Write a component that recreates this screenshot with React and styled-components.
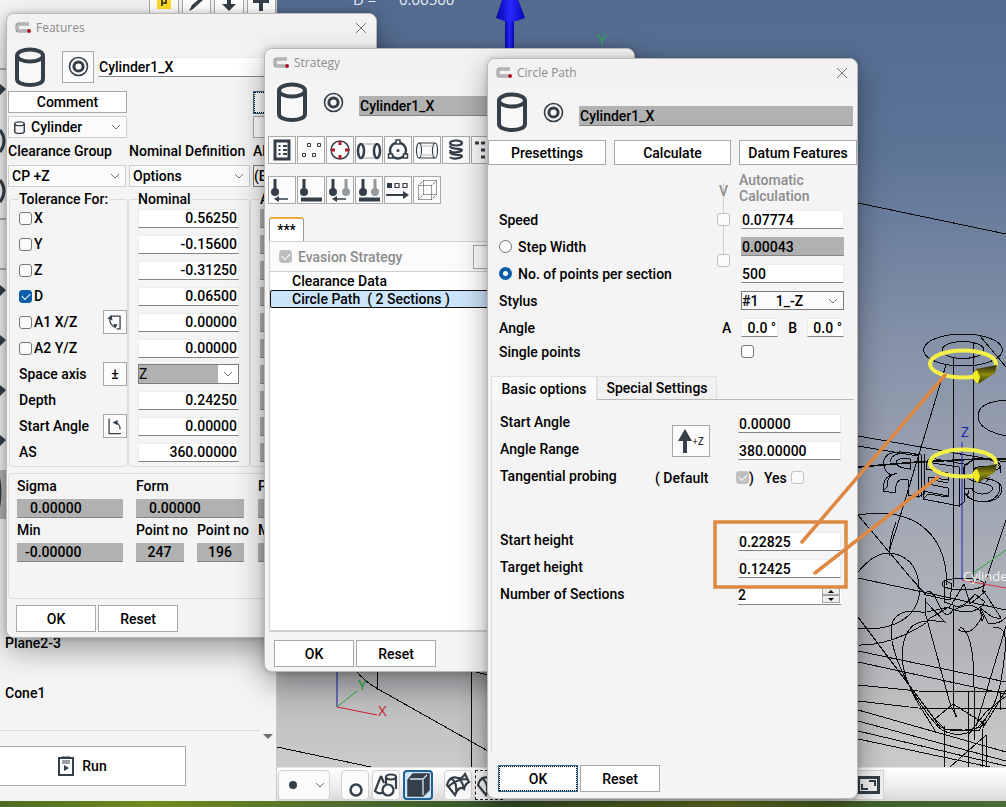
import React, { useState } from 'react'
import styled, { createGlobalStyle, ThemeProvider, css } from 'styled-components'

const theme = {
  ink: '#343f49',
  text: '#000',
  muted: '#8c8c8c',
  panel: '#f4f4f4',
  line: '#a8a8a8',
  soft: '#dcdcdc',
  readOnly: '#b1b1b1',
  blue: '#0c5ea8',
  mark: '#dd8843',
}

const GlobalStyle = createGlobalStyle`
  * { box-sizing: border-box; }
  body {
    margin: 0;
    overflow: hidden;
    font: 500 14px/16px Roboto, "Liberation Sans", sans-serif;
    color: #000;
  }
  button, input, select { font: inherit; color: inherit; margin: 0; border-radius: 0; }
`

/* ---------- desktop ---------- */

const Desktop = styled.div`
  position: relative;
  display: flex;
  flex-direction: column;
  height: 100vh;
  overflow: hidden;
`

const Workspace = styled.div`
  flex: 1;
  display: grid;
  grid-template-columns: 277px 1fr;
  min-height: 0;
`

const Grass = styled.div`
  height: 6px;
  background: linear-gradient(90deg, #4c6b22, #6f8c1d 15%, #4d6b2c 35%, #35522b 50%, #66751d 72%, #3f5f2c 88%, #4c6a3a);
`

const Sidebar = styled.aside`
  display: flex;
  flex-direction: column;
  background: ${(p) => p.theme.panel};
  border-right: 1px solid #c9c9c9;
  overflow: hidden;
`

const TopTools = styled.div`
  display: flex;
  align-items: flex-end;
  gap: 3px;
  height: 18px;
  padding-left: 149px;
`

const TopTool = styled.button`
  display: flex;
  align-items: flex-start;
  justify-content: center;
  width: 30px;
  height: 18px;
  padding: 0;
  background: #fff;
  border: solid ${(p) => p.theme.line};
  border-width: 0 1px;
`

const EdgeIcons = styled.div`
  flex: 1;
  min-height: 0;
`

const FeatureList = styled.ul`
  height: 96px;
  margin: 0 16px 0 0;
  padding: 0 5px;
  list-style: none;
  border-bottom: 1px solid ${(p) => p.theme.soft};
`

const FeatureItem = styled.li`
  height: 50px;
`

const RunArea = styled.div`
  display: flex;
  justify-content: space-between;
  align-items: flex-start;
  height: 70px;
  padding-right: 3px;
`

const RunButton = styled.button`
  display: flex;
  align-items: center;
  justify-content: center;
  gap: 8px;
  width: 186px;
  height: 40px;
  margin-top: 15px;
  padding: 0 20px 0 0;
  background: #fff;
  border: 1px solid ${(p) => p.theme.line};
  border-left: 0;
`

const Viewport = styled.main`
  display: flex;
  flex-direction: column;
  min-width: 0;
  min-height: 0;
`

const Scene = styled.svg`
  flex: 1;
  display: block;
  width: 100%;
  min-height: 0;
  background: linear-gradient(#536b8f, #5d7497 20%, #8592a8 45%, #a3a9b5 68%, #b4b5b9 85%, #cbcbcb);
`

const ViewTools = styled.div`
  display: flex;
  align-items: center;
  gap: 3px;
  height: 34px;
  padding: 0 122px 0 1px;
  background: linear-gradient(#fff, #ececec 60%, #d9d9d9);
  border-top: 1px solid #e3e3e3;
`

const ViewButton = styled.button`
  display: flex;
  align-items: center;
  justify-content: center;
  flex: none;
  width: ${(p) => p.$width || 28}px;
  height: 30px;
  margin-left: ${(p) => (p.$group ? 8 : 0)}px;
  padding: 0;
  background: ${(p) => (p.$active ? '#cfe5fa' : '#fbfbfb')};
  border: ${(p) => (p.$active ? '2px solid #215f97' : '1px solid #d2d2d2')};
  border-radius: 4px;
  ${(p) => p.$last && css`margin-left: auto; border-radius: 0; background: #f2f2f2; justify-content: flex-end; padding-right: 3px;`}
  ${(p) => p.$dotted && css`border: 1px dashed #222; border-radius: 0;`}
`

/* ---------- window parts ---------- */

const Frame = styled.section`
  position: absolute;
  left: ${(p) => p.$x}px;
  top: ${(p) => p.$y}px;
  width: 371px;
  background: ${(p) => p.theme.panel};
  border: 1px solid #b9b9b9;
  border-radius: 8px;
  box-shadow: 0 12px 30px rgba(0, 0, 0, 0.36), 0 0 6px rgba(0, 0, 0, 0.18);
  overflow: hidden;
`

const TitleBar = styled.header`
  display: flex;
  align-items: center;
  gap: 4px;
  height: 28px;
  padding: 0 8px;
  background: #f2f2f2;
`

const Title = styled.h1`
  flex: 1;
  margin: 0;
  font: 400 12px/16px "Open Sans", "Noto Sans", sans-serif;
  color: ${(p) => p.theme.muted};
`

const Close = styled.button`
  display: flex;
  width: 14px;
  height: 14px;
  padding: 1px;
  background: none;
  border: 0;
`

const Heading = styled.div`
  display: flex;
  align-items: center;
  height: ${(p) => p.$height || 50}px;
  padding-left: ${(p) => p.$indent || 8}px;
`

const IconSlot = styled.span`
  display: flex;
  align-items: center;
  justify-content: center;
  flex: none;
  width: 32px;
  height: 32px;
  margin: 0 ${(p) => p.$after || 0}px 0 ${(p) => p.$before || 10}px;
`

const Square = styled.button`
  display: flex;
  align-items: center;
  justify-content: center;
  flex: none;
  width: ${(p) => p.$w || 28}px;
  height: ${(p) => p.$h || p.$w || 28}px;
  padding: 0;
  background: #fbfbfb;
  border: 1px solid ${(p) => p.theme.line};
`

const Field = styled.input`
  display: block;
  flex: ${(p) => (p.$grow ? 1 : 'none')};
  width: ${(p) => p.$w || 103}px;
  min-width: 0;
  height: ${(p) => p.$h || 19}px;
  padding: 0 1px 0 ${(p) => p.$indent || 0}px;
  text-align: ${(p) => p.$align || 'left'};
  background: ${(p) => (p.readOnly ? p.theme.readOnly : '#fff')};
  border: 1px solid ${(p) => (p.readOnly ? p.theme.readOnly : '#ececec')};
  border-bottom-color: #858585;
  outline: 0;
`

const Button = styled.button`
  flex: none;
  width: ${(p) => p.$w || 80}px;
  height: ${(p) => p.$h || 27}px;
  padding: 0;
  background: #fff;
  border: 1px solid ${(p) => p.theme.line};
  ${(p) => p.$focused && css`
    border-color: #2c6c96;
    outline: 1px dotted #000;
    outline-offset: -2px;
  `}
`

const Check = styled.input.attrs({ type: 'checkbox' })`
  appearance: none;
  flex: none;
  display: grid;
  place-items: center;
  width: 13px;
  height: 13px;
  background: #fbfbfb;
  border: 1px solid #777;
  border-radius: 3px;
  &:checked { background: ${(p) => p.theme.blue}; border-color: ${(p) => p.theme.blue}; }
  &:checked::before {
    content: '';
    width: 7px;
    height: 4px;
    margin-bottom: 2px;
    border: solid #fff;
    border-width: 0 0 1px 1px;
    transform: rotate(-45deg);
  }
  &:disabled { border-color: #c2c2c2; }
  &:disabled:checked { background: #bebebe; }
`

const Radio = styled.input.attrs({ type: 'radio' })`
  appearance: none;
  width: 13px;
  height: 13px;
  background: #fbfbfb;
  border: 1px solid #6f6f6f;
  border-radius: 50%;
  &:checked { background: #fff; border: 4px solid ${(p) => p.theme.blue}; }
`

const ComboBox = styled.div`
  display: grid;
  grid-template-columns: 1fr 15px;
  align-items: center;
  width: ${(p) => p.$w}px;
  height: ${(p) => p.$h || 22}px;
  background: ${(p) => (p.$shaded ? `linear-gradient(90deg, #b1b1b1 calc(100% - 20px), #fff calc(100% - 20px))` : '#fbfbfb')};
  border: 1px solid ${(p) => (p.$strong ? '#7b7b7b' : '#cfcfcf')};
  select {
    grid-area: 1 / 1 / 2 / 3;
    appearance: none;
    width: 100%;
    height: 100%;
    padding: 0 0 0 ${(p) => p.$indent || 0}px;
    background: none;
    border: 0;
    outline: 0;
    font-weight: ${(p) => (p.$light ? 400 : 500)};
  }
  svg { pointer-events: none; }
  svg.lead { grid-area: 1 / 1; margin-left: 5px; }
  svg.arrow { grid-area: 1 / 2; }
`

const Combo = ({ label, value, lead, ...rest }) => (
  <ComboBox {...rest}>
    <select aria-label={label} defaultValue={value}>
      <option>{value}</option>
    </select>
    {lead}
    <Chevron className="arrow" />
  </ComboBox>
)

/* ---------- icons ---------- */

const Chevron = (props) => (
  <svg width="10" height="6" viewBox="0 0 10 6" fill="none" stroke="#777" {...props}>
    <path d="M1 1l4 4 4-4" />
  </svg>
)

const AppIcon = () => (
  <svg width="17" height="12" viewBox="0 0 17 12" fill="none">
    <path d="M14 2H4Q2 2 2 4v3q0 2 2 2h8" stroke="#8c8f8f" strokeWidth="3" />
    <path d="M14 2H4Q2 2 2 4v3q0 2 2 2h8" stroke="#d7dad9" />
    <circle cx="14" cy="9" r="2" fill="#a90f20" />
  </svg>
)

const CloseIcon = () => (
  <svg width="12" height="12" viewBox="0 0 12 12" stroke="#777">
    <path d="M1 1l10 10M11 1L1 11" />
  </svg>
)

const Cylinder = ({ small, ...rest }) => (
  <svg
    width={small ? 11 : 30}
    height={small ? 13 : 40}
    viewBox="0 0 30 40"
    preserveAspectRatio="none"
    fill="none"
    stroke="#343f49"
    strokeWidth="4"
    {...rest}
  >
    <path d="M2 9v23c0 8 26 8 26 0V9" fill="#f8f8f8" />
    <ellipse cx="15" cy="8.500" rx="13" ry="6" />
  </svg>
)

const Rings = () => (
  <svg width="21" height="21" viewBox="0 0 21 21" fill="none" stroke="#343f49">
    <circle cx="10.500" cy="10.500" r="9" strokeWidth="1.600" />
    <circle cx="10.500" cy="10.500" r="4.600" strokeWidth="3" />
  </svg>
)

const Icon = ({ children, size = 26, ...rest }) => (
  <svg width={size} height={size} viewBox="0 0 26 26" fill="none" stroke="#343f49" strokeWidth="1.500" {...rest}>
    {children}
  </svg>
)

const Probe = ({ x, color = '#343f49' }) => (
  <g fill={color} stroke="none">
    <path d={`M${x - 1.5} 2h3v11h-3z`} />
    <circle cx={x} cy="15" r="4" />
  </g>
)

const pathIcons = [
  ['List', (
    <Icon key="i">
      <path d="M6 4h14v18H6z" strokeWidth="3" />
      <path d="M9.500 9h2M14 9h4M9.500 13h2M14 13h4M9.500 17h2M14 17h4" strokeWidth="2" />
    </Icon>
  )],
  ['Points', (
    <Icon key="i" strokeWidth="1">
      <path d="M9.500 6.500h3v3h-3zM19.500 6.500h3v3h-3zM4.500 16.500h3v3h-3zM14.500 16.500h3v3h-3z" />
    </Icon>
  )],
  ['Circle', (
    <Icon key="i">
      <circle cx="13" cy="13" r="9" />
      <path d="M13 4v4M13 18v4M4 13h4M18 13h4" stroke="#b01f30" strokeWidth="3" />
    </Icon>
  )],
  ['Circle path', (
    <Icon key="i">
      <ellipse cx="5" cy="14" rx="3" ry="7" strokeWidth="2.500" />
      <ellipse cx="21" cy="14" rx="3" ry="7" strokeWidth="2.500" />
      <path d="M7 7h12M7 21h12" strokeWidth="1" stroke="#999" />
    </Icon>
  )],
  ['Three points', (
    <Icon key="i">
      <circle cx="13" cy="13.500" r="8" strokeWidth="2.500" />
      <circle cx="13" cy="13.500" r="1.500" fill="#343f49" stroke="none" />
      <path d="M11 3h4v4h-4zM3.500 17h4v4h-4zM18.500 17h4v4h-4z" fill="#fff" />
    </Icon>
  )],
  ['Line path', (
    <Icon key="i" strokeWidth="1.200">
      <path d="M5 6h16M5 21h16" />
      <ellipse cx="5" cy="13.500" rx="2.500" ry="7.500" />
      <ellipse cx="21" cy="13.500" rx="2.500" ry="7.500" />
      <path d="M5 9h16M5 18h16" stroke="#bbb" />
    </Icon>
  )],
  ['Helix', (
    <Icon key="i" strokeWidth="2.200">
      <ellipse cx="13" cy="6" rx="6" ry="2.500" />
      <path d="M7 9c0 4 12 2 12 4s-12 4-12 0M7 15c0 4 12 2 12 4s-10 4-12 1" />
    </Icon>
  )],
  ['Grid', (
    <Icon key="i">
      <path d="M3 6h4M9 6h4M15 6h4M9 13h4M15 13h4M9 20h4M15 20h4" strokeWidth="3" />
    </Icon>
  )],
]

const probeIcons = [
  ['Probe back', (
    <Icon key="i">
      <Probe x={6} />
      <path d="M7 22h12" />
      <path d="M5 22l5-3v6z" fill="#343f49" stroke="none" />
    </Icon>
  )],
  ['Probe surface', (
    <Icon key="i">
      <Probe x={6} />
      <path d="M3 22.500h21" strokeWidth="4" />
    </Icon>
  )],
  ['Probe move', (
    <Icon key="i">
      <Probe x={6} />
      <Probe x={19} color="#959a9e" />
      <path d="M7 22h12" />
      <path d="M5 22l5-3v6z" fill="#343f49" stroke="none" />
    </Icon>
  )],
  ['Probe scan', (
    <Icon key="i">
      <Probe x={7} />
      <Probe x={19} color="#959a9e" />
      <path d="M3 22.500h21" strokeWidth="4" />
    </Icon>
  )],
  ['Sequence', (
    <Icon key="i">
      <path d="M2 6h5v5H2z" fill="#343f49" stroke="none" />
      <path d="M10 6.500h4v4h-4zM18 6.500h4v4h-4z" strokeWidth="1.200" />
      <path d="M1 18h20" strokeWidth="2" />
      <path d="M24 18l-6-4v8z" fill="#343f49" stroke="none" />
    </Icon>
  )],
  ['Clearance cube', (
    <Icon key="i" strokeWidth="1" strokeDasharray="1 1">
      <path d="M4.500 8.500h13v14h-13zM9.500 3.500h13v14h-13zM4.500 8.500l5-5M17.500 8.500l5-5M4.500 22.500l5-5M17.500 22.500l5-5" />
    </Icon>
  )],
]

const CornerArrow = () => (
  <Icon size="22">
    <path d="M7 6h12v15h-4M7 9v3c1 4 3 6 6 7" />
    <path d="M4 9l5-4 1 6zM11 15l5 1-3 5z" fill="#343f49" stroke="none" />
  </Icon>
)

const AngleArrow = () => (
  <Icon size="22">
    <path d="M6 4v18h14" />
    <path d="M13 9c4 0 6 4 6 8" />
    <path d="M10 9l6-3v6z" fill="#343f49" stroke="none" />
  </Icon>
)

/* ---------- features window ---------- */

const FeatureGrid = styled.div`
  display: grid;
  grid-template-columns: 118px 121px 1fr;
  grid-template-rows: 25px 21px 28px 22px;
  column-gap: 3px;
  align-items: start;
  padding: 0 0 0 1px;
  white-space: nowrap;
`

const SideControl = styled.span`
  grid-column: 3;
  display: block;
`

const ColumnLabel = styled.span`
  align-self: center;
`

const Groups = styled.div`
  display: grid;
  grid-template-columns: 119px 122px 1fr;
  padding: 4px 0 0 2px;
`

const Group = styled.fieldset`
  min-width: 0;
  height: 276px;
  margin: 0;
  padding: 0 9px 0 9px;
  border: 1px solid ${(p) => p.theme.soft};
  border-radius: 3px;
  legend { height: 16px; margin-bottom: -2px; padding: 0 2px 0 0; white-space: nowrap; }
`

const GroupRow = styled.div`
  display: flex;
  align-items: center;
  gap: 2px;
  height: 26px;
  label { flex: 1; }
  & > button { margin-right: -9px; }
`

const Results = styled.div`
  display: grid;
  grid-template-columns: 108px 50px 50px 1fr;
  grid-template-rows: 24px 20px 24px 20px;
  column-gap: 11px;
  align-items: center;
  height: 126px;
  margin: 6px 0 0 1px;
  padding-left: 8px;
  border: 1px solid ${(p) => p.theme.soft};
  border-radius: 3px;
  white-space: nowrap;
`

const Wide = styled.label`
  grid-column: span 2;
`

const WideField = styled(Field)`
  grid-column: span 2;
`

const Footer = styled.footer`
  display: flex;
  gap: 2px;
  padding: ${(p) => p.$pad || '6px 9px 5px'};
`

const tolerances = [
  ['X', '0.56250'],
  ['Y', '-0.15600'],
  ['Z', '-0.31250'],
  ['D', '0.06500'],
  ['A1 X/Z', '0.00000'],
  ['A2 Y/Z', '0.00000'],
  ['Space axis', 'Z'],
  ['Depth', '0.24250'],
  ['Start Angle', '0.00000'],
  ['AS', '360.00000'],
]

const rowButtons = {
  'A1 X/Z': <CornerArrow />,
  'Space axis': '±',
  'Start Angle': <AngleArrow />,
}

function WindowBar({ title }) {
  return (
    <TitleBar>
      <AppIcon />
      <Title>{title}</Title>
      <Close aria-label="Close">
        <CloseIcon />
      </Close>
    </TitleBar>
  )
}

function FeaturesWindow() {
  return (
    <Frame $x={6} $y={13}>
      <WindowBar title="Features" />
      <Heading $height={49}>
        <Cylinder />
        <IconSlot $before={17} $after={4}>
          <Square $w={32} aria-label="Rings">
            <Rings />
          </Square>
        </IconSlot>
        <Field $grow $h={20} aria-label="Name" defaultValue="Cylinder1_X" />
      </Heading>
      <FeatureGrid>
        <Button $w={119} $h={22}>Comment</Button>
        <SideControl>
          <Button $w={100} $h={23} $focused aria-label="More" />
        </SideControl>
        <Combo $w={119} label="Feature type" value="Cylinder" $indent={22} lead={<Cylinder small className="lead" />} />
        <SideControl>
          <Button $w={100} $h={22} aria-label="Options" />
        </SideControl>
        <ColumnLabel>Clearance Group</ColumnLabel>
        <ColumnLabel>Nominal Definition</ColumnLabel>
        <ColumnLabel>Al</ColumnLabel>
        <Combo $w={118} label="Clearance Group" value="CP +Z" $indent={3} />
        <Combo $w={121} label="Nominal Definition" value="Options" $indent={3} />
        <Combo $w={100} $strong label="Alignment" value="(E" />
      </FeatureGrid>
      <Groups>
        <Group>
          <legend>Tolerance For:</legend>
          {tolerances.map(([name], i) => (
            <GroupRow key={name}>
              {i < 6 && <Check id={`tol-${i}`} defaultChecked={name === 'D'} />}
              <label htmlFor={i < 6 ? `tol-${i}` : `nom-${i}`}>{name}</label>
              {rowButtons[name] && (
                <Square $w={24} aria-label={`${name} setting`}>
                  {rowButtons[name]}
                </Square>
              )}
            </GroupRow>
          ))}
        </Group>
        <Group>
          <legend>Nominal</legend>
          {tolerances.map(([name, value], i) => (
            <GroupRow key={name}>
              {name === 'Space axis' ? (
                <Combo $w={101} $h={20} $shaded $strong $light label={name} value={value} />
              ) : (
                <Field id={`nom-${i}`} $w={101} $align="right" aria-label={`Nominal ${name}`} defaultValue={value} />
              )}
            </GroupRow>
          ))}
        </Group>
        <Group>
          <legend>A</legend>
          {tolerances.map(([name]) => (
            <GroupRow key={name}>
              <Field readOnly $w={90} aria-label={`Actual ${name}`} />
            </GroupRow>
          ))}
        </Group>
      </Groups>
      <Results>
        <label htmlFor="sigma">Sigma</label>
        <Wide htmlFor="form">Form</Wide>
        <span>P</span>
        <Field id="sigma" readOnly $w={106} $indent={12} defaultValue="0.00000" />
        <WideField id="form" readOnly $w={108} $indent={12} defaultValue="0.00000" />
        <Field readOnly $w={90} aria-label="P" />
        <label htmlFor="min">Min</label>
        <label htmlFor="no1">Point no</label>
        <label htmlFor="no2">Point no</label>
        <span>M</span>
        <Field id="min" readOnly $w={106} $indent={7} defaultValue="-0.00000" />
        <Field id="no1" readOnly $w={48} $align="center" defaultValue="247" />
        <Field id="no2" readOnly $w={47} $align="center" defaultValue="196" />
        <Field readOnly $w={90} aria-label="M" />
      </Results>
      <Footer>
        <Button>OK</Button>
        <Button>Reset</Button>
      </Footer>
    </Frame>
  )
}

/* ---------- strategy window ---------- */

const IconBar = styled.div`
  display: flex;
  gap: 1px;
  padding: ${(p) => p.$top}px 0 0 3px;
`

const StrategyTab = styled.button`
  display: block;
  width: 35px;
  height: 24px;
  margin: 13px 0 0 4px;
  padding: 0;
  background: #fff;
  border: 1px solid #999;
  border-top: 2px solid #e6ab39;
  border-bottom: 0;
  border-radius: 3px 3px 0 0;
`

const StrategyPanel = styled.div`
  margin-left: 4px;
  border: 1px solid #cfcfcf;
  border-width: 1px 0 2px 1px;
`

const Evasion = styled.div`
  display: flex;
  align-items: center;
  gap: 6px;
  height: 30px;
  padding-left: 9px;
  background: #fbfbfb;
  border-bottom: 1px solid #cfcfcf;
  color: ${(p) => p.theme.muted};
  label { width: 169px; }
`

const StepList = styled.ul`
  height: 358px;
  margin: 0;
  padding: 0;
  list-style: none;
  background: #fff;
`

const Step = styled.li`
  height: 18px;
  padding: 0 21px;
  line-height: 16px;
  border: 1px solid ${(p) => (p.$selected ? '#111' : 'transparent')};
  border-radius: 2px;
  background: ${(p) => (p.$selected ? '#cce4f9' : 'none')};
  white-space: pre;
`

function StrategyWindow() {
  return (
    <Frame $x={264} $y={48}>
      <WindowBar title="Strategy" />
      <Heading $indent={12}>
        <Cylinder />
        <IconSlot $after={10}>
          <Rings />
        </IconSlot>
        <NameField $grow readOnly $h={20} aria-label="Name" defaultValue="Cylinder1_X" />
      </Heading>
      <IconBar $top={9}>
        {pathIcons.map(([name, icon]) => (
          <Square key={name} aria-label={name}>{icon}</Square>
        ))}
      </IconBar>
      <IconBar $top={12}>
        {probeIcons.map(([name, icon]) => (
          <Square key={name} aria-label={name}>{icon}</Square>
        ))}
      </IconBar>
      <StrategyTab>***</StrategyTab>
      <StrategyPanel>
        <Evasion>
          <Check id="evasion" disabled defaultChecked />
          <label htmlFor="evasion">Evasion Strategy</label>
          <Button $w={100} $h={24} aria-label="Edit evasion" />
        </Evasion>
        <StepList>
          <Step>Clearance Data</Step>
          <Step $selected>{'Circle Path  ( 2 Sections )'}</Step>
        </StepList>
      </StrategyPanel>
      <Footer $pad="8px 9px 4px">
        <Button>OK</Button>
        <Button>Reset</Button>
      </Footer>
    </Frame>
  )
}

/* ---------- circle path window ---------- */

const Actions = styled.div`
  display: flex;
  justify-content: space-between;
  padding: 3px 0 0;
`

const Settings = styled.div`
  display: grid;
  grid-template-columns: 1fr 17px 103px;
  grid-template-rows: 36px repeat(5, 27px) 21px;
  column-gap: 9px;
  align-items: center;
  padding: 5px 13px 0 11px;
`

const AutoLabel = styled.div`
  grid-column: 1 / 4;
  grid-row: 1;
  justify-self: end;
  width: 105px;
  color: ${(p) => p.theme.muted};
`

const AutoColumn = styled.div`
  grid-column: 2;
  grid-row: 2 / 5;
  align-self: start;
  display: flex;
  flex-direction: column;
  align-items: center;
  gap: 28px;
  height: 75px;
  margin-top: -23px;
  background: linear-gradient(#cfcfcf, #cfcfcf) center / 1px 100% no-repeat;
  color: ${(p) => p.theme.muted};
  span { height: 2px; }
`

const RowLabel = styled.label`
  grid-column: 1;
  display: flex;
  align-items: center;
  gap: 6px;
`

const Cell = styled.div`
  grid-column: ${(p) => (p.$wide ? '2 / 4' : 3)};
  display: flex;
  align-items: center;
  justify-content: ${(p) => (p.$wide ? 'space-between' : 'flex-start')};
`

const Tabs = styled.div`
  display: flex;
  align-items: flex-end;
  margin: 14px 3px 0;
  border-bottom: 1px solid #b9b9b9;
`

const Tab = styled.button`
  width: ${(p) => p.$w}px;
  height: ${(p) => (p.$active ? 24 : 23)}px;
  margin-bottom: ${(p) => (p.$active ? -1 : 0)}px;
  padding: 0;
  background: ${(p) => (p.$active ? '#f9f9f9' : '#f1f1f1')};
  border: 1px solid #e0e0e0;
  border-bottom: 0;
`

const TabPanel = styled.div`
  display: grid;
  grid-template-columns: 155px 1fr 103px;
  grid-template-rows: 27px 27px 27px 37px 27px 27px 27px;
  align-items: center;
  height: 352px;
  margin: 0 3px;
  padding: 10px 13px 0 8px;
  border-left: 1px solid ${(p) => p.theme.soft};
  ${RowLabel} { padding-bottom: 3px; }
`

const ZButton = styled(Square)`
  grid-column: 2;
  grid-row: 1 / 3;
  justify-self: end;
  margin: 8px 28px 0 0;
  font: 400 10px/12px "Open Sans", sans-serif;
  align-self: center;
`

const Tangential = styled.div`
  grid-column: 2 / 4;
  display: flex;
  align-items: center;
  label { width: 81px; }
  label:nth-of-type(2) { width: auto; margin: 0 4px 0 10px; }
`

const Spinner = styled.div`
  display: flex;
  background: #fff;
  border-bottom: 1px solid #858585;
  height: 19px;
  input { border: 0; }
`

const SpinnerButtons = styled.div`
  display: flex;
  flex-direction: column;
  margin: 1px 1px 0 auto;
`

const SpinnerButton = styled.button`
  display: flex;
  align-items: center;
  justify-content: center;
  width: 18px;
  height: 8px;
  padding: 0;
  background: #ececec;
  border: 1px solid #a5a5a5;
`

const NameField = styled(Field)`
  margin: 8px 4px 0 0;
`

const RowSpacer = styled.div`
  grid-column: 1 / 4;
`

function CirclePathWindow() {
  const [mode, setMode] = useState('points')
  return (
    <Frame $x={487} $y={58}>
      <WindowBar title="Circle Path" />
      <Heading $indent={9}>
        <Cylinder />
        <IconSlot $after={10}>
          <Rings />
        </IconSlot>
        <NameField readOnly $grow $h={20} aria-label="Name" defaultValue="Cylinder1_X" />
      </Heading>
      <Actions>
        <Button $w={118} $h={25}>Presettings</Button>
        <Button $w={117} $h={25}>Calculate</Button>
        <Button $w={118} $h={25}>Datum Features</Button>
      </Actions>
      <Settings>
        <AutoLabel>Automatic<br />Calculation</AutoLabel>
        <AutoColumn>
          <span>V</span>
          <Check disabled aria-label="Automatic speed" />
          <Check disabled aria-label="Automatic step width" />
        </AutoColumn>
        <RowLabel htmlFor="speed">Speed</RowLabel>
        <Cell><Field id="speed" defaultValue="0.07774" /></Cell>
        <RowLabel>
          <Radio name="mode" checked={mode === 'step'} onChange={() => setMode('step')} />
          Step Width
        </RowLabel>
        <Cell><Field readOnly aria-label="Step Width value" defaultValue="0.00043" /></Cell>
        <RowLabel>
          <Radio name="mode" checked={mode === 'points'} onChange={() => setMode('points')} />
          No. of points per section
        </RowLabel>
        <Cell><Field aria-label="Number of points" defaultValue="500" /></Cell>
        <RowLabel as="span">Stylus</RowLabel>
        <Cell>
          <Combo $w={103} $h={19} $strong label="Stylus" value={'#1\u00a0\u00a0\u00a0\u00a0\u00a01_-Z'} />
        </Cell>
        <RowLabel as="span">Angle</RowLabel>
        <Cell $wide>
          <label htmlFor="angle-a">&nbsp; A</label>
          <Field id="angle-a" $w={37} $align="right" defaultValue="0.0 °" />
          <label htmlFor="angle-b">B</label>
          <Field id="angle-b" $w={37} $align="right" defaultValue="0.0 °" />
        </Cell>
        <RowLabel htmlFor="single">Single points</RowLabel>
        <Cell><Check id="single" /></Cell>
      </Settings>
      <Tabs>
        <Tab $w={106} $active>Basic options</Tab>
        <Tab $w={120}>Special Settings</Tab>
      </Tabs>
      <TabPanel>
        <RowLabel htmlFor="start-angle">Start Angle</RowLabel>
        <ZButton $w={38} $h={32} aria-label="Direction">
          <svg width="14" height="26" viewBox="0 0 14 26" fill="#343f49">
            <path d="M7 1l7 12H9v12H5V13H0z" />
          </svg>
          +Z
        </ZButton>
        <Cell><Field id="start-angle" defaultValue="0.00000" /></Cell>
        <RowLabel htmlFor="range">Angle Range</RowLabel>
        <Cell><Field id="range" defaultValue="380.00000" /></Cell>
        <RowLabel as="span">Tangential probing</RowLabel>
        <Tangential>
          <label htmlFor="default">( Default</label>
          <Check id="default" disabled defaultChecked />)
          <label htmlFor="yes">Yes</label>
          <Check id="yes" disabled />
        </Tangential>
        <RowSpacer />
        <RowLabel htmlFor="start-height">Start height</RowLabel>
        <Cell><Field id="start-height" defaultValue="0.22825" /></Cell>
        <RowLabel htmlFor="target-height">Target height</RowLabel>
        <Cell><Field id="target-height" defaultValue="0.12425" /></Cell>
        <RowLabel htmlFor="sections">Number of Sections</RowLabel>
        <Cell>
          <Spinner>
            <Field id="sections" $w={84} $h={18} defaultValue="2" />
            <SpinnerButtons>
              <SpinnerButton aria-label="More sections">
                <svg width="6" height="3"><path d="M3 0l3 3H0z" /></svg>
              </SpinnerButton>
              <SpinnerButton aria-label="Fewer sections">
                <svg width="6" height="3"><path d="M0 0h6L3 3z" /></svg>
              </SpinnerButton>
            </SpinnerButtons>
          </Spinner>
        </Cell>
      </TabPanel>
      <Footer $pad="13px 10px 6px">
        <Button $focused>OK</Button>
        <Button>Reset</Button>
      </Footer>
    </Frame>
  )
}

/* ---------- 3D view ---------- */

const Letters = () => (
  <g>
    <path d="M884 464c-2-12 14-15 34-9v42l-10-2v-15c-9-2-12 0-13 13l-12-2c0-12 4-14 8-16-4-2-7-6-7-11z" />
    <path d="M891 462c-2-8 12-12 30-7v42M896 462c2-4 8-4 14-3v10c-8-1-13-2-14-7zM921 455l-3-2M918 497l6-3v-40M883 491l4-4c0-9 4-14 10-13" />
    <path d="M926 462l33 5v39l-36-7v-8l25 5v-8l-20-4v-7l20 3v-7l-22-4z" />
    <path d="M930 458l34 6v38l-5 4M923 499l5-5 20 3M928 484l5-4 15 3M926 462l4-4" />
    <path d="M963 470c3-14 32-15 37-2l-7 3c-4-7-19-6-20 1 3 8 27 4 29 17-1 19-38 15-38 0l8-1c1 8 20 8 21 0-4-8-28-2-30-18z" />
    <path d="M967 465c6-10 30-8 33 0l1 8M996 481c8 5 3 17-8 20M969 490l-2 7 8 4M975 479l6-5M986 482l4-5" />
  </g>
)

const DirectionRing = ({ y }) => (
  <g>
    <ellipse cx="963" cy={y} rx="33" ry="13.500" fill="none" stroke="#f5f047" strokeWidth="4" />
    <path d={`M976 ${y + 5}l21-4-2 8-17 11q-5-7-2-15z`} fill="url(#cone)" />
    <path d={`M973 ${y + 9}l4-3 3 7-2 7-5-5z`} fill="#f1ec20" />
  </g>
)

function SceneView() {
  return (
    <Scene viewBox="277 0 729 767" preserveAspectRatio="xMinYMin slice">
      <defs>
        <linearGradient id="cone" x1="0" y1="0" x2="0" y2="1">
          <stop offset="0" stopColor="#25240a" />
          <stop offset="0.500" stopColor="#8f8b0c" />
          <stop offset="1" stopColor="#33320a" />
        </linearGradient>
        <linearGradient id="arrow">
          <stop offset="0" stopColor="#0707a5" />
          <stop offset="0.500" stopColor="#2727ff" />
          <stop offset="1" stopColor="#0707b5" />
        </linearGradient>
      </defs>
      <g fontFamily="Open Sans, sans-serif">
        <text x="353" y="5" fontSize="15" fill="#e7edf5">D =</text>
        <text x="399" y="5" fontSize="15" fill="#e7edf5">0.06500</text>
        <path d="M505 18h9v40h-9z" fill="url(#arrow)" />
        <path d="M504-6h12l9 24q-14 7-29 0z" fill="url(#arrow)" />
        <text x="598" y="45" fontSize="15" fill="#27b04c">Y</text>
        <path d="M337 670v37" stroke="#1818b5" />
        <path d="M337 707l20-16" stroke="#24a838" />
        <path d="M337 707l40 8" stroke="#c81f2b" />
        <text x="358" y="690" fontSize="15" fill="#24a838">Y</text>
        <text x="378" y="716" fontSize="15" fill="#c81f2b">X</text>
      </g>
      <g fill="none" stroke="#0b0b0d" shapeRendering="crispEdges">
        <path d="M356 670q6 10 22 19l110 62M377 670v20M471 670v97M277 747l94 20M476 672l12 3M858 203l148 31" />
        <ellipse cx="963" cy="350" rx="39.500" ry="16" />
        <ellipse cx="963" cy="350" rx="21" ry="8.500" />
        <path d="M953 357v230M973 342v240M980 336l26 31M946 365l-50 165q-9 25-6 26M858 436l148 26M858 446l60 10M1006 400q-28 2-28 16t28 20" />
        <path d="M858 467l60-5 60-3h28" strokeWidth="1.600" />
        <Letters />
        <path d="M858 515c50-8 88 12 89 70M858 572q26-32 52-10 9 10 9 27M858 515l63 75M890 552q-1-10 6-30M1006 520l-24 72M858 578l148 32M920 590c-2 28-28 42-62 38M858 645q32 1 68-22" />
        <ellipse cx="963" cy="584" rx="21" ry="6" />
        <path d="M912 579l14 16 24 5 2-16-8-4v22l6 2M924 595q6-10 14 8t14 8q18-10 26-2t4 12l-2-14 8 16q12 2 18-6M926 602l19 20-18-2 22-13-22 5M952 604l12-20 6 20 16-13M951 604q10 8 24-10l10 8q-10 16-36 6zM983 590l18 28q-8 2-20-10" />
        <path d="M926 613c-22-6-34 2-35 16 0 34 30 78 44 94 6 10 28 18 44 3 18-18 22-38 26-74 2-20-2-26-12-24M928 621c-24 0-26 24-26 38 4 34 28 60 34 74M926 598l-1 14 26 95 6 10M953 605v100l3 12M960 627q14 4 14 60v53M958 629q12 10 24-12M1006 626l-30 100M858 617l78 104M935 719l18-15 32 20M935 719q4 14 30 11t20-12M935 719l10 10 34 2 4-8" />
        <path d="M858 651l148 31M858 662l148 32M858 685l60 6 88 1M858 701l60 7 88 1M858 710l148 42M858 721l148 40M858 731l148 35M858 739l132 28M944 726v41M968 692v75M982 729v38M986 735v32M950 767l36-32M968 735l18-23 20-16M1000 692v18M1006 690l-23 38" />
      </g>
      <path d="M962 442v138" stroke="#2121b8" />
      <path d="M972 574l34-24" stroke="#2aa83b" />
      <path d="M962 580l44 8" stroke="#d2323d" />
      <text x="961" y="437" fontSize="14" fontFamily="Open Sans, sans-serif" fill="#2121b8">Z</text>
      <text x="963" y="581" fontSize="13" fontFamily="Open Sans, sans-serif" fill="#f5f5f5">Cylinder1</text>
      <DirectionRing y={364} />
      <DirectionRing y={463} />
    </Scene>
  )
}

const Overlay = styled.svg`
  position: absolute;
  inset: 0;
  width: 100%;
  height: 100%;
  pointer-events: none;
`

function ViewToolbar() {
  return (
    <ViewTools>
      <ViewButton $width={52} aria-label="Point size">
        <svg width="44" height="12" viewBox="0 0 44 12" fill="none">
          <circle cx="11" cy="6" r="4" fill="#343f49" />
          <path d="M34 4l4 4 4-4" stroke="#777" />
        </svg>
      </ViewButton>
      <ViewButton $group aria-label="Circle view">
        <Icon><circle cx="14" cy="18" r="5.500" strokeWidth="2.500" /></Icon>
      </ViewButton>
      <ViewButton aria-label="Shapes">
        <Icon strokeWidth="2.200">
          <path d="M8 4L2 19q4 4 9 1M8 4l3 7M13 5v8M23 5v12" />
          <ellipse cx="18" cy="5" rx="5" ry="2.500" />
          <circle cx="15" cy="18" r="5.500" />
        </Icon>
      </ViewButton>
      <ViewButton $width={30} $active aria-label="Solid">
        <Icon>
          <path d="M3 8l5-6h16v16l-6 6H3z" fill="#343f49" />
          <path d="M5 7h13l4-4M18 8v15" stroke="#d7e6f4" strokeWidth="1.300" />
        </Icon>
      </ViewButton>
      <ViewButton $group aria-label="Surface">
        <Icon strokeWidth="2.200">
          <path d="M2 13Q5 3 13 6q4 1 7-4l4 8q-4 2-5 7-5-4-9 6zM7 7q5 4 4 12M13 6q5 4 6 11M4 14q8-7 18-7" />
        </Icon>
      </ViewButton>
      <ViewButton $dotted aria-label="Surface edge">
        <Icon strokeWidth="2.200">
          <path d="M2 13Q5 3 13 6q4 1 7-4l4 8q-4 2-5 7-5-4-9 6zM7 7q5 4 4 12" />
        </Icon>
      </ViewButton>
      <ViewButton $last $width={30} aria-label="Full screen">
        <svg width="23" height="18" viewBox="0 0 23 18" fill="none" stroke="#343f49">
          <path d="M1.500 1.500h20v15h-20z" strokeWidth="3" />
          <path d="M12 5h6v5M5 8v5h6" strokeWidth="2" />
        </svg>
      </ViewButton>
    </ViewTools>
  )
}

function App() {
  return (
    <ThemeProvider theme={theme}>
      <GlobalStyle />
      <Desktop>
        <Workspace>
          <Sidebar>
            <TopTools>
              <TopTool aria-label="Probe">
                <svg width="14" height="10"><path d="M0 0h14v9H0z" fill="#ffdc24" /><path d="M5 6V0M5 3h4V0" fill="none" stroke="#554b13" strokeWidth="2" /></svg>
              </TopTool>
              <TopTool aria-label="Edit">
                <svg width="20" height="12"><path d="M3 11l3-6 6-5h5L7 9z" fill="#343f49" /></svg>
              </TopTool>
              <TopTool aria-label="Down">
                <svg width="16" height="12"><path d="M6 0h4v4h5l-7 7-7-7h5z" fill="#343f49" /></svg>
              </TopTool>
              <TopTool aria-label="Up">
                <svg width="16" height="12"><path d="M0 0h16v3h-6v8H6V3H0z" fill="#343f49" /></svg>
              </TopTool>
            </TopTools>
            <EdgeIcons>
              <svg width="8" height="600" viewBox="0 18 8 600" fill="#343f49">
                <path d="M0 84l6 5-6 6zM0 285l6 5-6 6zM0 335l6 5-6 6zM0 385l6 5-6 6zM0 435l6 5-6 6z" />
                <path d="M0 130q8 11 0 22M0 180q8 11 0 22" fill="none" stroke="#343f49" strokeWidth="3" />
                <path d="M0 69h6M0 219h6M0 269h6" stroke="#666" />
                <path d="M0 470h8v49H0z" fill="#b5b5b5" />
                <path d="M0 477q3 15 0 31z" />
              </svg>
            </EdgeIcons>
            <FeatureList>
              <FeatureItem>Plane2-3</FeatureItem>
              <FeatureItem>Cone1</FeatureItem>
            </FeatureList>
            <RunArea>
              <RunButton>
                <svg width="16" height="20" viewBox="0 0 16 20" fill="none" stroke="#343f49">
                  <path d="M1 2h14v17H1z" strokeWidth="2" />
                  <path d="M4 1h8M4 5h8M4 7h8" />
                  <path d="M6 9l5 3-5 3z" fill="#343f49" stroke="none" />
                </svg>
                Run
              </RunButton>
              <svg width="10" height="8"><path d="M0 3h10L5 8z" fill="#707070" /></svg>
            </RunArea>
          </Sidebar>
          <Viewport>
            <SceneView />
            <ViewToolbar />
          </Viewport>
        </Workspace>
        <Grass />
        <FeaturesWindow />
        <StrategyWindow />
        <CirclePathWindow />
        <Overlay fill="none" stroke={theme.mark} strokeWidth="3.500">
          <path d="M715 522h131v65H715z" />
          <path d="M802 542l143-167M815 573l123-96" strokeLinecap="round" />
        </Overlay>
      </Desktop>
    </ThemeProvider>
  )
}

export default App
